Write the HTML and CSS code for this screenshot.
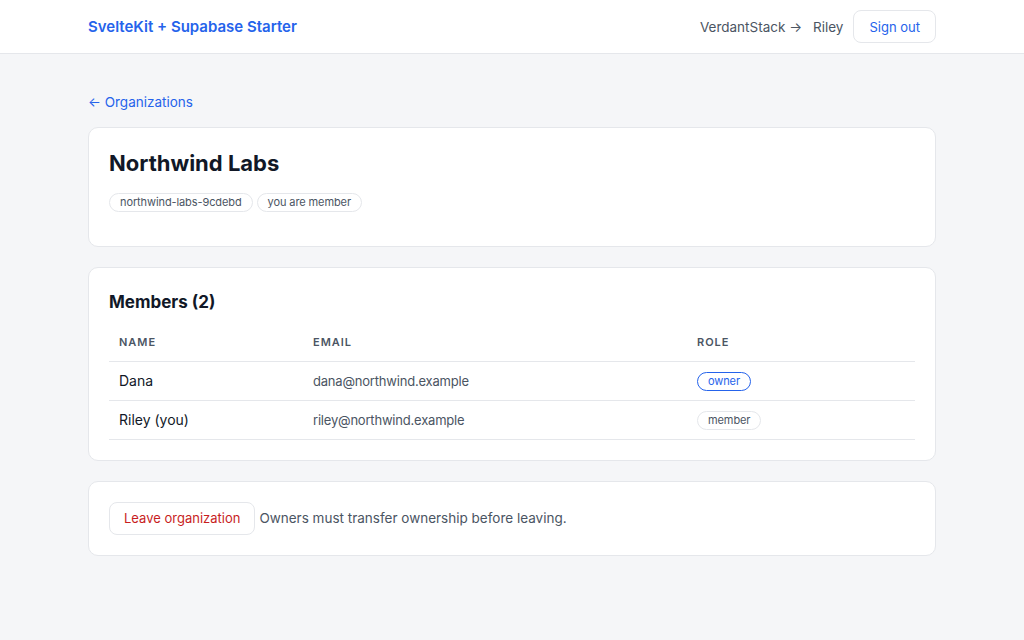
FILE: index.html
```html
<!DOCTYPE html>
<html lang="en">
<head>
    <meta charset="UTF-8">
    <meta name="viewport" content="width=device-width, initial-scale=1.0">
    <title>Northwind Labs · SvelteKit + Supabase Starter</title>
    <link rel="stylesheet" href="styles.css">
</head>
<body>
    <header class="topbar">
        <div class="wrap topbar-inner">
            <a class="brand" href="#">SvelteKit + Supabase Starter</a>
            <nav class="user-nav">
                <span class="org-switch">VerdantStack →</span>
                <span class="user-name">Riley</span>
                <button class="btn btn-primary-text">Sign out</button>
            </nav>
        </div>
    </header>

    <main class="wrap page">
        <a class="back-link" href="#">← Organizations</a>

        <section class="card">
            <h1 class="org-title">Northwind Labs</h1>
            <div class="chips">
                <span class="chip">northwind-labs-9cdebd</span>
                <span class="chip">you are member</span>
            </div>
        </section>

        <section class="card">
            <h2 class="section-title">Members (2)</h2>
            <table class="members">
                <thead>
                    <tr>
                        <th class="col-name">Name</th>
                        <th class="col-email">Email</th>
                        <th>Role</th>
                    </tr>
                </thead>
                <tbody>
                    <tr>
                        <td>Dana</td>
                        <td class="email">dana@northwind.example</td>
                        <td><span class="chip chip-owner">owner</span></td>
                    </tr>
                    <tr>
                        <td>Riley (you)</td>
                        <td class="email">riley@northwind.example</td>
                        <td><span class="chip">member</span></td>
                    </tr>
                </tbody>
            </table>
        </section>

        <section class="card card-row">
            <button class="btn btn-danger-text">Leave organization</button>
            <span class="hint">Owners must transfer ownership before leaving.</span>
        </section>
    </main>
</body>
</html>
```

FILE: styles.css
```css
:root {
    --blue: #2563eb;
    --red: #c81e1e;
    --text: #111827;
    --muted: #4b5563;
    --border: #e5e7eb;
    --bg: #f5f6f8;
}

* {
    box-sizing: border-box;
}

body {
    margin: 0;
    font-family: Inter, "Noto Sans", sans-serif;
    font-size: 14px;
    color: var(--text);
    background-color: var(--bg);
}

a {
    text-decoration: none;
}

.wrap {
    width: 848px;
    margin: 0 auto;
}

.topbar {
    background-color: white;
    border-bottom: 1px solid var(--border);
}

.topbar-inner {
    height: 53px;
    display: flex;
    align-items: center;
    justify-content: space-between;
}

.brand {
    color: var(--blue);
    font-weight: 600;
    font-size: 15px;
}

.user-nav {
    display: flex;
    align-items: center;
    gap: 10px;
    font-size: 13.5px;
    color: var(--muted);
}

.org-switch {
    margin-right: 1px;
}

.btn {
    font-family: inherit;
    font-size: 13px;
    background-color: white;
    border: 1px solid var(--border);
    border-radius: 8px;
    height: 33px;
    padding: 0 14px;
    cursor: pointer;
}

.user-nav .btn {
    padding: 0 15px;
}

.btn-primary-text {
    color: var(--blue);
}

.btn-danger-text {
    color: var(--red);
}

.page {
    padding-top: 39px;
    display: flex;
    flex-direction: column;
}

.back-link {
    color: var(--blue);
    font-size: 13.5px;
    line-height: 18px;
    margin-bottom: 16px;
    align-self: flex-start;
}

.card {
    background-color: white;
    border: 1px solid var(--border);
    border-radius: 10px;
    padding: 20px;
    margin-bottom: 20px;
}

.org-title {
    margin: 0 0 15px;
    font-size: 22px;
    line-height: 30px;
    font-weight: 700;
}

.chips {
    display: flex;
    gap: 4px;
    margin-bottom: 14px;
}

.chip {
    display: inline-block;
    font-size: 11px;
    line-height: 17px;
    padding: 0 10px;
    letter-spacing: -0.1px;
    color: var(--muted);
    border: 1px solid var(--border);
    border-radius: 999px;
}

.chip-owner {
    color: var(--blue);
    border-color: var(--blue);
}

.section-title {
    margin: 2px 0 9px;
    font-size: 17px;
    line-height: 24px;
    font-weight: 700;
}

.members {
    width: 100%;
    border-collapse: collapse;
}

.members th,
.members td {
    text-align: left;
    padding: 0 10px;
    border-bottom: 1px solid var(--border);
}

.members th {
    height: 38px;
    font-size: 11px;
    font-weight: 600;
    letter-spacing: 0.09em;
    text-transform: uppercase;
    color: var(--muted);
}

.members td {
    height: 39px;
}

.col-name {
    width: 194px;
}

.col-email {
    width: 384px;
}

.email {
    font-size: 13px;
    letter-spacing: -0.2px;
    color: var(--muted);
}

.hint {
    font-size: 13.5px;
    color: var(--muted);
}

.card-row {
    display: flex;
    align-items: center;
    gap: 4px;
}
```
